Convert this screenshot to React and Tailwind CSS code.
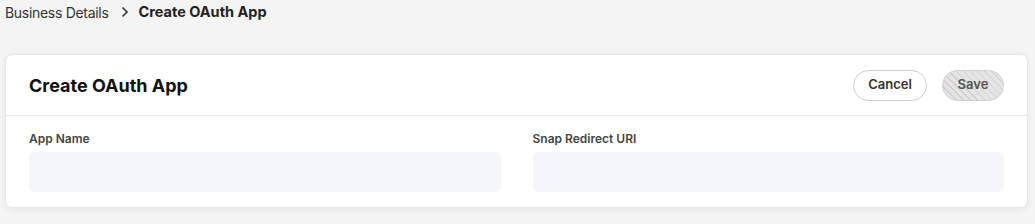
import React from "react";

export default function App() {
  const font = { fontFamily: "Inter, 'Liberation Sans', sans-serif" };
  return (
    <div className="w-[1035px] h-[224px] bg-[#f4f4f4] px-[5px] pt-[3px] overflow-hidden" style={font}>
      <div className="flex items-center h-[18px] text-[14px] text-[#333]">
        <span className="tracking-[-0.3px]">Business Details</span>
        <svg width="12" height="14" viewBox="0 0 12 14" className="ml-[10px] mr-[8px]">
          <path d="M3.5 2.5 L8 7 L3.5 11.5" fill="none" stroke="#333" strokeWidth="1.6" />
        </svg>
        <span className="font-bold text-[#222] text-[14.5px] tracking-[0px]">Create OAuth App</span>
      </div>
      <div className="mt-[33px] w-[1023px] bg-white rounded-[7px] border border-[#e6e6e6] shadow-[0_2px_6px_rgba(0,0,0,0.06)]">
        <div className="h-[61px] flex items-center justify-between pl-[23px] pr-[23px] border-b border-[#e6e6e6]">
          <h1 className="text-[18px] font-bold text-[#111] tracking-[0px]">Create OAuth App</h1>
          <div className="flex items-center gap-[15px]">
            <button className="h-[31px] w-[74px] rounded-full border border-[#ccc] bg-white text-[13px] font-semibold text-[#333]">
              Cancel
            </button>
            <button className="h-[31px] w-[62px] rounded-full border border-[#d0d0d0] text-[13px] font-semibold text-[#555] bg-[#e4e4e4] bg-[repeating-linear-gradient(45deg,#e4e4e4_0px,#e4e4e4_4px,#cfcfcf_4px,#cfcfcf_5px)]">
              Save
            </button>
          </div>
        </div>
        <div className="grid grid-cols-2 gap-[32px] px-[23px] pt-[15px] pb-[15px]">
          <div>
            <label className="block text-[12px] font-semibold text-[#444] h-[15px] leading-[15px]">App Name</label>
            <div className="mt-[6px] h-[40px] rounded-[5px] bg-[#f5f6f8]" />
          </div>
          <div>
            <label className="block text-[12px] font-semibold text-[#444] h-[15px] leading-[15px]">Snap Redirect URI</label>
            <div className="mt-[6px] h-[40px] rounded-[5px] bg-[#f5f6f8]" />
          </div>
        </div>
      </div>
    </div>
  );
}
